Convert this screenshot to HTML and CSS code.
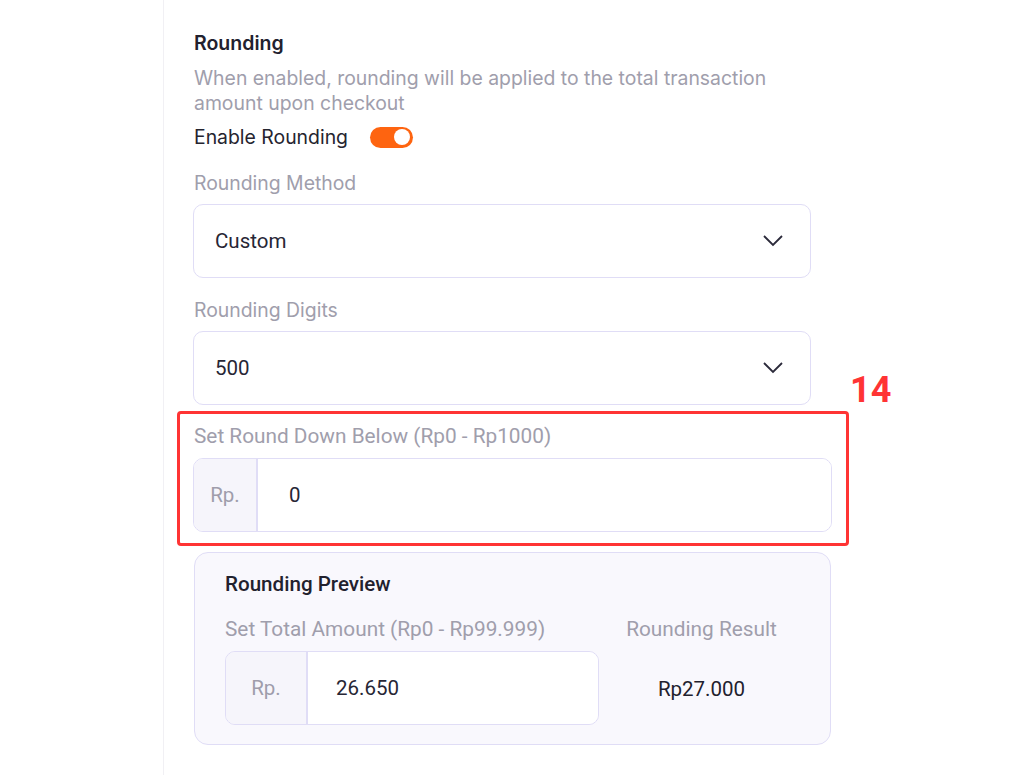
FILE: index.html
```html
<!DOCTYPE html>
<html>
<head>
<meta charset="utf-8">
<link rel="stylesheet" href="styles.css">
</head>
<body>
<div class="page">
  <div class="rail"></div>
  <div class="content">
    <h2 class="title">Rounding</h2>
    <p class="desc">When enabled, rounding will be applied to the total transaction amount upon checkout</p>
    <div class="toggle-row">
      <span class="toggle-label">Enable Rounding</span>
      <span class="toggle"><span class="knob"></span></span>
    </div>
    <div class="field first">
      <div class="label">Rounding Method</div>
      <div class="select">
        <span class="value">Custom</span>
        <svg class="chev" width="22" height="14" viewBox="0 0 22 14"><path d="M2 2 L11 11 L20 2" fill="none" stroke="#2b2a3a" stroke-width="1.8"/></svg>
      </div>
    </div>
    <div class="field">
      <div class="label">Rounding Digits</div>
      <div class="select">
        <span class="value">500</span>
        <svg class="chev" width="22" height="14" viewBox="0 0 22 14"><path d="M2 2 L11 11 L20 2" fill="none" stroke="#2b2a3a" stroke-width="1.8"/></svg>
      </div>
    </div>
    <div class="highlight">
      <div class="label roboto">Set Round Down Below (Rp0 - Rp1000)</div>
      <div class="group wide">
        <span class="prefix">Rp.</span>
        <span class="gvalue">0</span>
      </div>
      <span class="badge">14</span>
    </div>
    <div class="preview">
      <div class="ptitle">Rounding Preview</div>
      <div class="prow">
        <div class="pcol">
          <div class="label roboto">Set Total Amount (Rp0 - Rp99.999)</div>
          <div class="group narrow">
            <span class="prefix p2">Rp.</span>
            <span class="gvalue v2">26.650</span>
          </div>
        </div>
        <div class="rcol">
          <div class="label roboto">Rounding Result</div>
          <div class="result">Rp27.000</div>
        </div>
      </div>
    </div>
  </div>
</div>
</body>
</html>
```
FILE: styles.css
```css
* { box-sizing: border-box; }
html, body { margin: 0; padding: 0; background: #fff; }
body { font-family: Inter, "Noto Sans", sans-serif; color: #2a2937; }
.page { display: flex; height: 775px; overflow: hidden; }
.rail { width: 164px; border-right: 1px solid #f1f0f4; flex: none; }
.content { padding: 30px 0 0 30px; width: 700px; }
.title { margin: 0; font-size: 19.5px; font-weight: 600; line-height: 26px; color: #22212e; }
.desc { margin: 10px 0 0; font-size: 19.4px; line-height: 25px; color: #a09eac; width: 620px; }
.toggle-row { display: flex; align-items: center; margin-top: 10px; height: 22px; }
.toggle-label { font-size: 19.4px; color: #25242f; }
.toggle { width: 43px; height: 21px; border-radius: 11px; background: #fe6410; margin-left: 22px; position: relative; display: inline-block; }
.knob { position: absolute; right: 3px; top: 2.5px; width: 16px; height: 16px; border-radius: 50%; background: #fff; }
.field { margin-top: 20px; }
.field.first { margin-top: 23px; }
.label { font-size: 19.4px; color: #a09eac; line-height: 24px; }
.roboto { font-family: Roboto, sans-serif; font-size: 20.8px; }
.select { margin-top: 9px; width: 618px; height: 74px; border: 1.5px solid #e0ddf6; border-radius: 10px; display: flex; align-items: center; justify-content: space-between; padding: 0 26px 0 21px; margin-left: -1px; }
.value { font-family: Roboto, sans-serif; font-size: 20.5px; color: #272635; }
.highlight { position: relative; margin: 6px 0 0 -17px; width: 672px; border: 3px solid #ff3434; border-radius: 4px; padding: 10px 14px 11px 14px; }
.badge { position: absolute; left: 670px; top: -45px; color: #ff3434; font-family: Roboto, sans-serif; font-weight: 700; font-size: 36px; }
.group { display: flex; height: 74px; border: 1.5px solid #e0ddf6; border-radius: 10px; overflow: hidden; margin-top: 10px; }
.wide { width: 639px; margin-left: -1px; }
.prefix { width: 64px; flex: none; background: #f6f5fb; border-right: 2px solid #e0ddf6; display: flex; align-items: center; justify-content: center; font-family: Roboto, sans-serif; font-size: 20.5px; color: #9f9dab; }
.gvalue { display: flex; align-items: center; padding-left: 31px; font-family: Roboto, sans-serif; font-size: 20.5px; color: #272635; background: #fff; flex: 1; }
.preview { margin-top: 6px; width: 637px; border: 1.5px solid #e0ddf6; border-radius: 14px; background: #f9f8fd; padding: 18px 30px 19px 30px; }
.ptitle { font-family: Roboto, sans-serif; font-weight: 500; font-size: 20.6px; color: #22212e; line-height: 26px; }
.prow { display: flex; margin-top: 20px; }
.pcol { width: 374px; }
.narrow { width: 374px; }
.p2 { width: 82px; }
.v2 { padding-left: 28px; }
.rcol { flex: 1; display: flex; flex-direction: column; align-items: center; padding-left: 4px; }
.result { font-family: Roboto, sans-serif; font-size: 20.5px; color: #22212e; margin-top: 36px; }
```
